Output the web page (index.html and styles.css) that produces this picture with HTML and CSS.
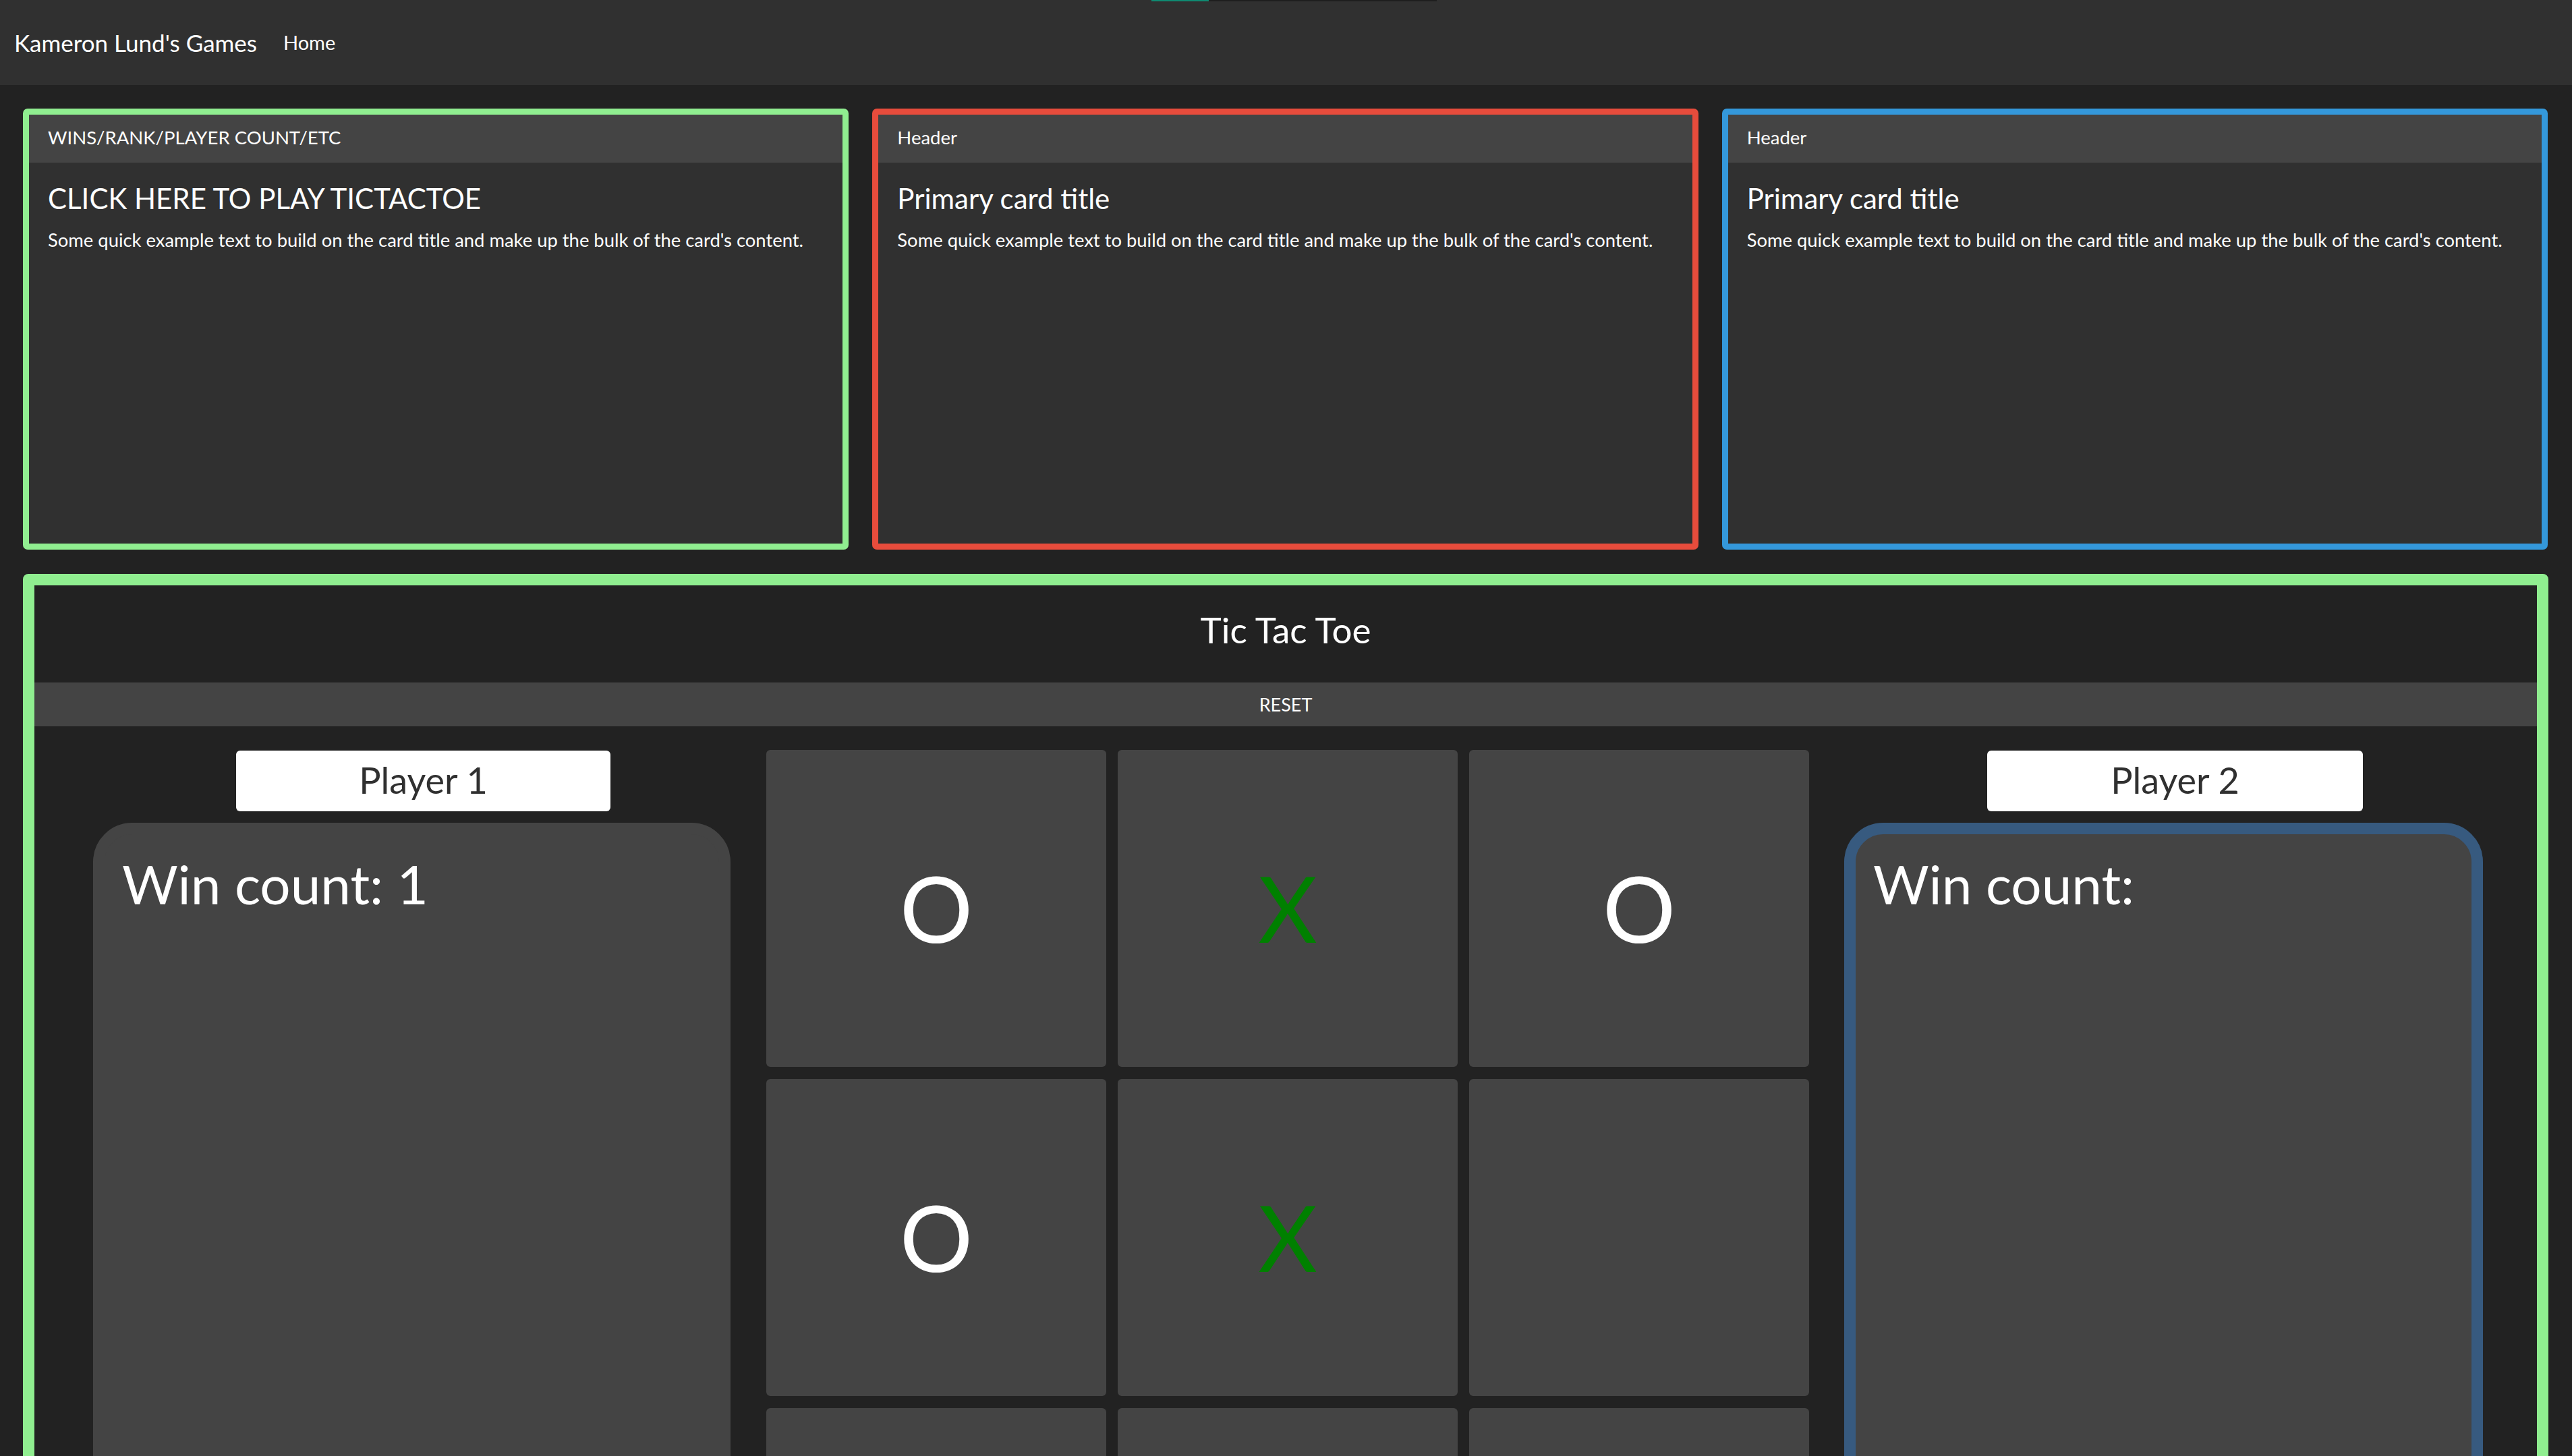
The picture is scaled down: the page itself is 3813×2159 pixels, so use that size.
FILE: index.html
```html
<!DOCTYPE html>
<html lang="en">
<head>
<meta charset="utf-8">
<title>Kameron Lund's Games</title>
<link rel="stylesheet" href="styles.css">
</head>
<body>
<div class="loadbar"><div class="loadbar-fill"></div></div>
<nav class="navbar">
  <span class="brand">Kameron Lund's Games</span>
  <span class="nav-link">Home</span>
</nav>

<section class="cards">
  <div class="card card-green">
    <div class="card-header">WINS/RANK/PLAYER COUNT/ETC</div>
    <div class="card-body">
      <h4 class="card-title">CLICK HERE TO PLAY TICTACTOE</h4>
      <p class="card-text">Some quick example text to build on the card title and make up the bulk of the card's content.</p>
    </div>
  </div>
  <div class="card card-red">
    <div class="card-header">Header</div>
    <div class="card-body">
      <h4 class="card-title">Primary card title</h4>
      <p class="card-text">Some quick example text to build on the card title and make up the bulk of the card's content.</p>
    </div>
  </div>
  <div class="card card-blue">
    <div class="card-header">Header</div>
    <div class="card-body">
      <h4 class="card-title">Primary card title</h4>
      <p class="card-text">Some quick example text to build on the card title and make up the bulk of the card's content.</p>
    </div>
  </div>
</section>

<section class="game">
  <h2 class="game-title">Tic Tac Toe</h2>
  <div class="reset">RESET</div>
  <div class="play">
    <div class="player player-one">
      <div class="player-label">Player 1</div>
      <div class="win">Win count: 1</div>
    </div>
    <div class="board">
      <div class="cell o">O</div>
      <div class="cell x">X</div>
      <div class="cell o">O</div>
      <div class="cell o">O</div>
      <div class="cell x">X</div>
      <div class="cell"></div>
      <div class="cell"></div>
      <div class="cell"></div>
      <div class="cell"></div>
    </div>
    <div class="player player-two">
      <div class="player-label">Player 2</div>
      <div class="win win-active">Win count:</div>
    </div>
  </div>
</section>
</body>
</html>
```

FILE: styles.css
```css
* {
  box-sizing: border-box;
}

html,
body {
  margin: 0;
}

body {
  background: #222222;
  color: #ffffff;
  font-family: Lato, "Noto Sans", "Liberation Sans", sans-serif;
}

/* top loading indicator overlay */
.loadbar {
  position: absolute;
  top: 0;
  left: 1707px;
  width: 423px;
  height: 2px;
  background: #1e1e1e;
}

.loadbar-fill {
  width: 85px;
  height: 100%;
  background: #0f8a72;
}

/* navbar */
.navbar {
  height: 126px;
  background: #303030;
  display: flex;
  align-items: center;
  padding-left: 21px;
}

.brand {
  font-size: 35px;
  line-height: 1.2;
  margin-right: 39px;
}

.nav-link {
  font-size: 29px;
  line-height: 1.2;
}

/* cards */
.cards {
  display: grid;
  grid-template-columns: repeat(3, 1fr);
  gap: 35px;
  padding: 35px 36px 0 34px;
}

.card {
  height: 654px;
  border: 9px solid;
  border-radius: 7px;
  background: #303030;
  overflow: hidden;
}

.card-green {
  border-color: #90ee90;
}

.card-red {
  border-color: #e74c3c;
}

.card-blue {
  border-color: #3498db;
}

.card-header {
  background: #444444;
  padding: 13px 28px 17px;
  font-size: 27.5px;
  line-height: 1.5;
  border-bottom: 1px solid #383838;
}

.card-body {
  padding: 27px 28px;
}

.card-title {
  margin: 0 0 15px;
  font-size: 42px;
  font-weight: 400;
  line-height: 1.2;
}

.card-text {
  margin: 0;
  font-size: 27.4px;
  line-height: 1.5;
}

/* game */
.game {
  margin: 36px 35px 0 34px;
  border: 17px solid #90ee90;
  border-radius: 8px;
  padding: 34px 0 40px;
}

.game-title {
  margin: 0 0 46px;
  font-size: 53px;
  font-weight: 400;
  line-height: 1.2;
  text-align: center;
}

.reset {
  height: 65px;
  background: #444444;
  display: flex;
  align-items: center;
  justify-content: center;
  font-size: 27px;
}

.play {
  display: grid;
  grid-template-columns: 1085px 1546px 1fr;
  align-items: start;
  margin-top: 35px;
}

.board {
  display: grid;
  grid-template-columns: repeat(3, 504px);
  grid-auto-rows: 470px;
  gap: 18px 17px;
}

.cell {
  background: #444444;
  border-radius: 6px;
  display: flex;
  align-items: center;
  justify-content: center;
  font-size: 135px;
  line-height: 1;
}

.cell.o {
  color: #ffffff;
}

.cell.x {
  color: #008000;
}

.player-label {
  height: 90px;
  margin-top: 1px;
  background: #ffffff;
  color: #303030;
  border-radius: 6px;
  display: flex;
  align-items: center;
  justify-content: center;
  font-size: 54px;
  line-height: 1.2;
}

.win {
  margin-top: 17px;
  height: 1340px;
  border: 17px solid #444444;
  border-radius: 58px;
  background: #444444;
  padding: 25px 26px;
  font-size: 80px;
  line-height: 1.2;
}

.win-active {
  border-color: #375a7f;
}

.player-one .player-label {
  width: 555px;
  margin-left: 299px;
}

.player-one .win {
  width: 945px;
  margin-left: 87px;
}

.player-two .player-label {
  width: 557px;
  margin-left: 264px;
}

.player-two .win {
  width: 947px;
  margin-left: 52px;
}
```
